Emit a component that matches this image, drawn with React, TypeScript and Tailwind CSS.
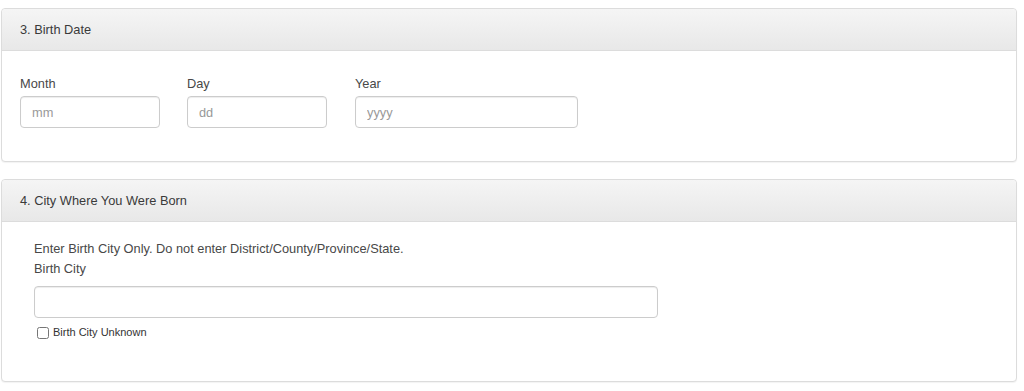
import React from "react";

function Panel({ title, children }: { title: string; children: React.ReactNode }) {
  return (
    <div className="rounded-[4px] border border-[#dcdcdc] bg-white shadow-[0_1px_1px_rgba(0,0,0,0.05)]">
      <div className="flex h-[42px] items-center rounded-t-[4px] border-b border-[#dcdcdc] bg-gradient-to-b from-[#f5f5f5] to-[#e8e8e8] px-[18px] text-[12.8px] text-[#3a3a3a]">
        {title}
      </div>
      {children}
    </div>
  );
}

function Field({ label, placeholder, width }: { label: string; placeholder: string; width: string }) {
  return (
    <div className="flex flex-col">
      <label className="text-[12.8px] leading-[18px] text-[#484848]">{label}</label>
      <input
        placeholder={placeholder}
        className={`${width} mt-[3px] h-[32px] rounded-[4px] border border-[#ccc] px-[11px] text-[12.8px] text-[#555] placeholder:text-[#999] shadow-[inset_0_1px_1px_rgba(0,0,0,0.075)] outline-none`}
      />
    </div>
  );
}

export default function App() {
  return (
    <div className="min-h-[391px] bg-white pt-[8px] pl-[1px] pr-[7px] font-['Liberation_Sans',Arial,sans-serif]">
      <Panel title="3. Birth Date">
        <div className="flex pt-[24px] pb-[33px] pl-[18px]">
          <div className="w-[167px]">
            <Field label="Month" placeholder="mm" width="w-[140px]" />
          </div>
          <div className="w-[168px]">
            <Field label="Day" placeholder="dd" width="w-[140px]" />
          </div>
          <div>
            <Field label="Year" placeholder="yyyy" width="w-[223px]" />
          </div>
        </div>
      </Panel>

      <div className="h-[17px]" />

      <Panel title="4. City Where You Were Born">
        <div className="pt-[18px] pb-[42px] pl-[32px]">
          <p className="text-[12.8px] leading-[18px] text-[#484848]">
            Enter Birth City Only. Do not enter District/County/Province/State.
          </p>
          <label className="mt-[2px] block text-[12.8px] leading-[18px] text-[#484848]">Birth City</label>
          <input className="mt-[8px] h-[32px] w-[624px] rounded-[4px] border border-[#ccc] px-[11px] text-[12.8px] shadow-[inset_0_1px_1px_rgba(0,0,0,0.075)] outline-none" />
          <label className="mt-[8px] flex h-[13px] items-center text-[11px] text-[#333]">
            <input type="checkbox" className="ml-[3px] mr-[4px] h-[12px] w-[12px]" />
            Birth City Unknown
          </label>
        </div>
      </Panel>
    </div>
  );
}
